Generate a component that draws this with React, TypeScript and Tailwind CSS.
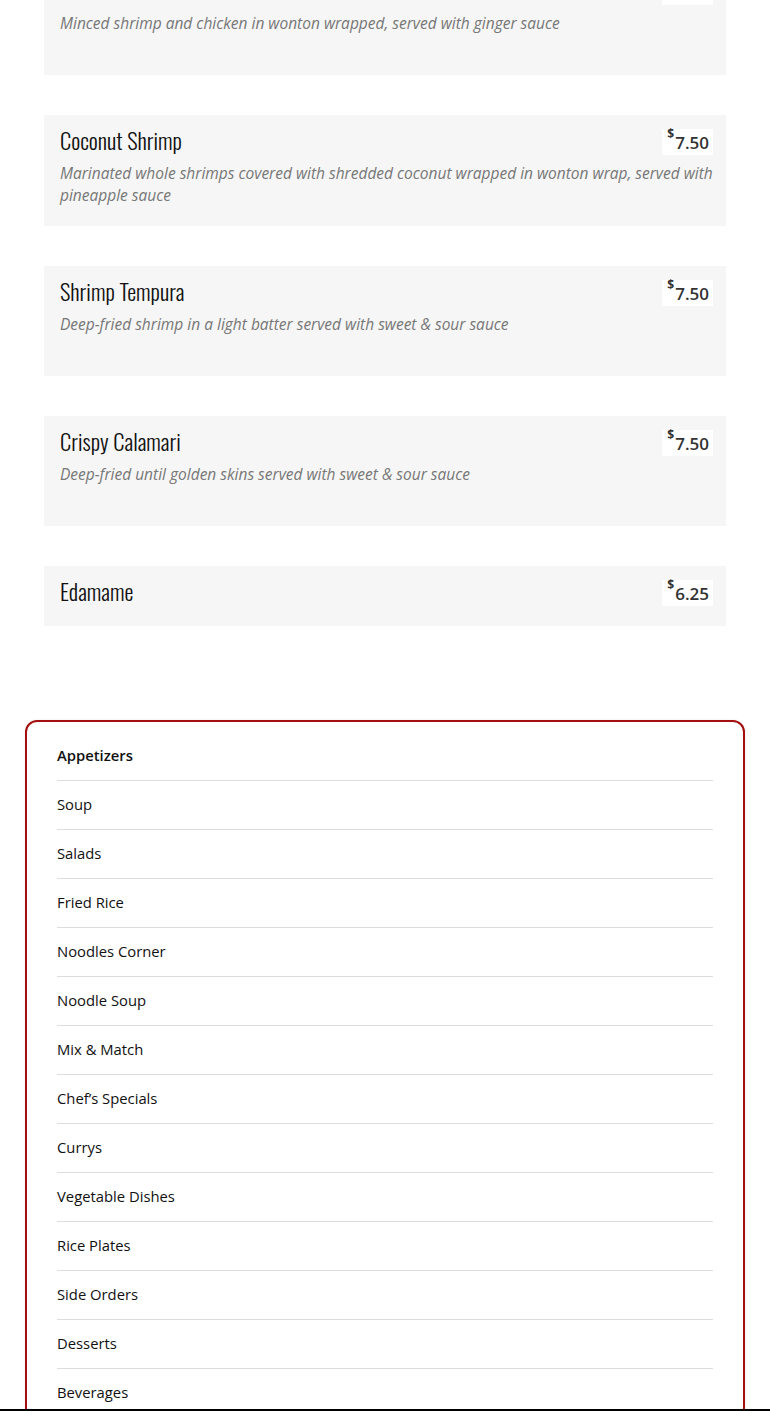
import React from 'react';

type Item = { name: string; price: string; desc?: string };

const items: Item[] = [
    { name: 'Fried Wonton', price: '6.95', desc: 'Minced shrimp and chicken in wonton wrapped, served with ginger sauce' },
    { name: 'Coconut Shrimp', price: '7.50', desc: 'Marinated whole shrimps covered with shredded coconut wrapped in wonton wrap, served with pineapple sauce' },
    { name: 'Shrimp Tempura', price: '7.50', desc: 'Deep-fried shrimp in a light batter served with sweet & sour sauce' },
    { name: 'Crispy Calamari', price: '7.50', desc: 'Deep-fried until golden skins served with sweet & sour sauce' },
    { name: 'Edamame', price: '6.25' },
];

const categories = [
    'Appetizers', 'Soup', 'Salads', 'Fried Rice', 'Noodles Corner', 'Noodle Soup', 'Mix & Match',
    'Chef’s Specials', 'Currys', 'Vegetable Dishes', 'Rice Plates', 'Side Orders', 'Desserts', 'Beverages',
];

const titleFont = { fontFamily: '"Oswald", "DejaVu Sans Condensed", "Liberation Sans Narrow", sans-serif' };

const MenuCard: React.FC<{ item: Item; first?: boolean }> = ({ item, first }) => (
    <div className={`bg-[#f6f6f6] pl-4 pr-[13px] pt-[14px] pb-[20px] ${item.desc ? 'min-h-[110px]' : ''} ${first ? '-mt-[35px]' : ''}`}>
        <div className="flex items-center justify-between h-[26px]">
            <h3 className="text-[22.5px] leading-[26px] font-light text-[#111] mb-[5px]" style={titleFont}>
                {item.name}
            </h3>
            <span className="bg-white h-[26px] pl-[5px] pr-1 flex items-center text-[#333] font-semibold text-[17px] leading-none">
                <sup className="text-[12px] -mt-1 mr-px font-bold">$</sup>{item.price}
            </span>
        </div>
        {item.desc && (
            <p className="mt-[7px] text-[15.5px] leading-[22px] italic text-[#777]">{item.desc}</p>
        )}
    </div>
);

export default function App() {
    return (
        <div className="bg-white min-h-screen overflow-hidden font-['Open_Sans',sans-serif]">
            <div className="px-[44px] flex flex-col gap-10">
                {items.map((it, i) => (
                    <MenuCard key={it.name} item={it} first={i === 0} />
                ))}
            </div>

            <div className="mx-[25px] mt-[94px] border-2 border-[#a3100f] rounded-[12px] px-[30px] pt-[10px] shadow-[0_0_3px_rgba(0,0,0,0.08)]">
                {categories.map((c, i) => (
                    <div
                        key={c}
                        className={`h-[49px] flex items-center pb-px border-b border-[#dddddd] text-[14.8px] text-[#111] ${i === 0 ? 'font-semibold' : ''}`}
                    >
                        {c}
                    </div>
                ))}
            </div>

            <div className="fixed bottom-0 left-0 right-0 h-[2px] bg-black" />
        </div>
    );
}
